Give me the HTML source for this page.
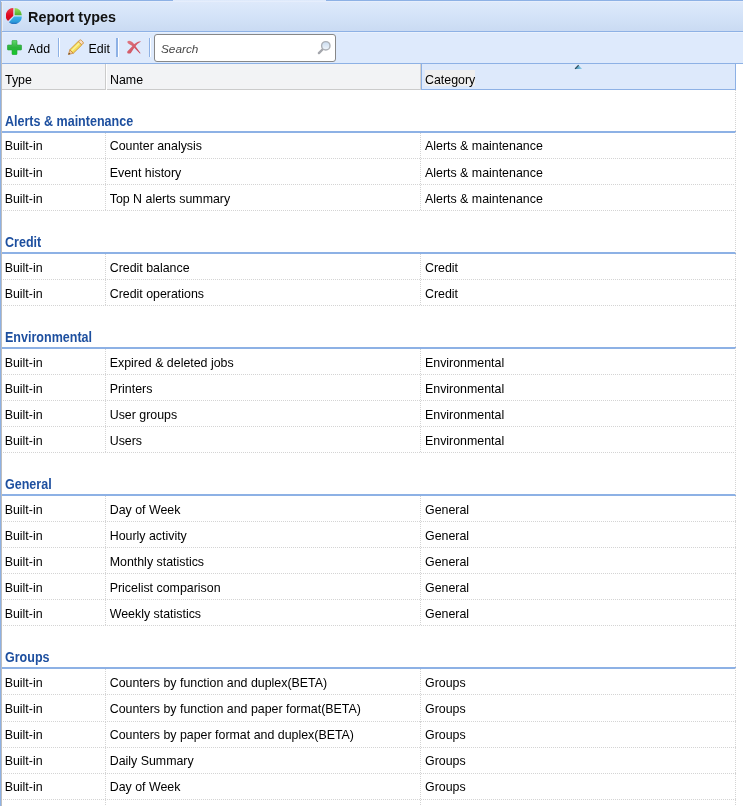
<!DOCTYPE html><html><head><meta charset="utf-8"><style>
*{box-sizing:border-box}
html,body{margin:0;padding:0}
body{width:743px;height:806px;overflow:hidden;position:relative;-webkit-font-smoothing:antialiased;background:#fff;font-family:"Liberation Sans",sans-serif;color:#000}
.a{position:absolute}
.t{position:absolute;white-space:nowrap;line-height:16px}
#title{left:0;top:0;width:743px;height:32px;background:linear-gradient(#dfeafb,#d4e3f8 50%,#c9daf2)}
#tb{left:0;top:32px;width:743px;height:32px;background:#deeafc}
.hdr{top:64px;height:26px;background:#f2f3f5}
.grow,.row{position:relative;left:0;width:743px}
.grow{height:43px}
.grow .ln{position:absolute;left:2px;width:734px;top:41px;height:2px;background:#8db1e5}
.grow .gt{position:absolute;left:5px;top:24px;font-weight:bold;font-size:14px;transform:scaleX(0.895);transform-origin:0 0;color:#1d4f9f;line-height:14px;white-space:nowrap}
.row{height:26px}
.row .hl{position:absolute;left:2px;width:734px;top:25px;height:1px;background:repeating-linear-gradient(to right,transparent 0 1px,#d4d4d4 1px 2px)}
.vl{position:absolute;top:0;width:1px;height:26px;background:repeating-linear-gradient(to bottom,#d4d4d4 0 1px,transparent 1px 2px)}
.c{position:absolute;top:1.5px;height:25px;line-height:25px;font-size:12.4px;white-space:nowrap}
</style></head><body><div id="root" style="position:absolute;left:0;top:0;width:743px;height:806px;overflow:hidden;will-change:transform">
<div id="title" class="a"></div>
<div class="a" style="left:0;top:0;width:173px;height:1px;background:#8db1e5"></div>
<div class="a" style="left:326px;top:0;width:417px;height:1px;background:#8db1e5"></div>
<div class="a" style="left:1px;top:1px;width:742px;height:1px;background:#e6eefc"></div>
<div class="a" style="left:0;top:31px;width:743px;height:1px;background:#8db1e5"></div>
<svg class="a" style="left:6px;top:8px" width="16" height="16" viewBox="0 0 16 16">
<defs>
<linearGradient id="gr" x1="0" y1="0" x2="0" y2="1"><stop offset="0" stop-color="#e83a48"/><stop offset="0.6" stop-color="#e00820"/><stop offset="1" stop-color="#c81020"/></linearGradient>
<linearGradient id="gg" x1="0" y1="0" x2="0" y2="1"><stop offset="0" stop-color="#9ee05a"/><stop offset="1" stop-color="#4fb02c"/></linearGradient>
<linearGradient id="gb" x1="0" y1="0" x2="0" y2="1"><stop offset="0" stop-color="#3cb4ec"/><stop offset="0.7" stop-color="#2a9ada"/><stop offset="1" stop-color="#2466b8"/></linearGradient>
</defs>
<path d="M8.6,7.2 L8.6,0 A7.2,7.2 0 0 1 15.8,7.2 Z" fill="url(#gg)"/>
<path d="M7.3,7.7 L7.3,0.1 A7.6,7.6 0 0 0 2.0,13.1 Z" fill="url(#gr)"/>
<path d="M8.1,8.5 L15.8,8.5 A7.7,7.7 0 0 1 2.9,14.2 Z" fill="url(#gb)"/>
</svg>
<div class="t" style="left:28px;top:9px;font-size:14.4px;font-weight:bold;color:#111">Report types</div>
<div id="tb" class="a"></div>
<div class="a" style="left:2px;top:32px;width:741px;height:1px;background:#e9f1fd"></div>
<div class="a" style="left:0;top:63px;width:743px;height:1px;background:#8db1e5"></div>
<svg class="a" style="left:7px;top:40px" width="15" height="15" viewBox="0 0 15 15">
<defs><linearGradient id="pg" x1="0" y1="0" x2="0" y2="1"><stop offset="0" stop-color="#62d86c"/><stop offset="0.5" stop-color="#2eb23e"/><stop offset="1" stop-color="#12cc2a"/></linearGradient></defs>
<path d="M6,0.3 H9 Q10,0.3 10,1.3 V5 H13.7 Q14.7,5 14.7,6 V9 Q14.7,10 13.7,10 H10 V13.7 Q10,14.7 9,14.7 H6 Q5,14.7 5,13.7 V10 H1.3 Q0.3,10 0.3,9 V6 Q0.3,5 1.3,5 H5 V1.3 Q5,0.3 6,0.3 Z" fill="url(#pg)" stroke="#2a9e3a" stroke-width="0.6"/>
</svg>
<div class="t" style="left:28px;top:41px;font-size:12.4px">Add</div>
<div class="a" style="left:58px;top:38px;width:1px;height:19px;background:#8db1e5"></div><div class="a" style="left:59px;top:38px;width:1px;height:19px;background:#fff"></div>
<svg class="a" style="left:66px;top:38px" width="20" height="20" viewBox="0 0 20 20">
<g transform="rotate(-44.4 9.6 9.45)">
<path d="M-0.5,9.5 L3.9,7.1 L3.9,11.9 Z" fill="#f3c89a" stroke="#c8863c" stroke-width="0.7"/>
<path d="M-0.6,9.5 L1.2,8.5 L1.2,10.5 Z" fill="#4a3010"/>
<rect x="3.9" y="7.0" width="11.9" height="5" fill="#f4df58" stroke="#cc8a30" stroke-width="0.8"/>
<rect x="4.5" y="8.2" width="10.9" height="1.6" fill="#faef9a"/>
<rect x="15.7" y="7.0" width="3.0" height="5" rx="1.4" fill="#f9e0c8" stroke="#cc8a30" stroke-width="0.8"/>
</g></svg>
<div class="t" style="left:88.5px;top:41px;font-size:12.4px">Edit</div>
<div class="a" style="left:116px;top:38px;width:2px;height:19px;background:#8db1e5"></div><div class="a" style="left:118px;top:38px;width:1px;height:19px;background:#fff"></div>
<svg class="a" style="left:124px;top:38px" width="20" height="18" viewBox="0 0 20 18">
<defs><linearGradient id="xg" x1="0" y1="0" x2="1" y2="1"><stop offset="0" stop-color="#e07a84"/><stop offset="1" stop-color="#c84050"/></linearGradient></defs>
<path d="M3.4,3.6 C4.2,2.2 7.4,2.6 9.6,5.4 L16.6,15.3 L15.9,15.6 L8.4,8.0 C6.6,6.6 2.9,5.9 3.4,3.6 Z" fill="url(#xg)"/>
<path d="M3.3,13.4 L10.4,6.0 C12.4,4.4 14.5,3.4 16.6,3.2 L16.7,3.7 C14.6,4.8 12.6,6.6 11.1,8.6 L6.9,14.9 C5.8,16.3 2.4,15.6 3.3,13.4 Z" fill="url(#xg)"/>
</svg>
<div class="a" style="left:149px;top:38px;width:1px;height:19px;background:#8db1e5"></div><div class="a" style="left:150px;top:38px;width:1px;height:19px;background:#fff"></div>
<div class="a" style="left:154px;top:34px;width:182px;height:28px;background:#fff;border:1px solid #878787;border-radius:3px"></div>
<div class="t" style="left:161px;top:40.5px;font-size:11.8px;font-style:italic;color:#474747">Search</div>
<svg class="a" style="left:314px;top:38px" width="20" height="20" viewBox="0 0 20 20">
<defs><linearGradient id="mg" x1="0" y1="0" x2="0" y2="1"><stop offset="0" stop-color="#cadcf0"/><stop offset="1" stop-color="#f2f7fc"/></linearGradient></defs>
<line x1="4.9" y1="15.1" x2="9" y2="11" stroke="#a4a6ac" stroke-width="2.4" stroke-linecap="round"/>
<circle cx="11.8" cy="7.8" r="4.2" fill="url(#mg)" stroke="#acb0b6" stroke-width="1.4"/>
</svg>
<div class="a hdr" style="left:2px;width:104px;border-right:1px solid #cbcbcb;border-bottom:1px solid #cbcbcb"></div>
<div class="a" style="left:106px;top:64px;width:1px;height:26px;background:#fff"></div>
<div class="a hdr" style="left:107px;width:314px;border-right:1px solid #d6d2cd;border-bottom:1px solid #cbcbcb"></div>
<div class="a hdr" style="left:421px;width:315px;background:#dde9fb;border:1px solid #8db1e5;border-top:0"></div>
<div class="t" style="left:5px;top:72px;font-size:12.4px">Type</div>
<div class="t" style="left:110px;top:72px;font-size:12.4px">Name</div>
<div class="a" style="left:425px;top:70px;width:50px;height:16px;background:#efefef"></div>
<div class="t" style="left:425px;top:72px;font-size:12.4px">Category</div>
<svg class="a" style="left:574px;top:64px" width="9" height="6" viewBox="0 0 9 6">
<defs><linearGradient id="ag" x1="0" y1="0" x2="1" y2="0"><stop offset="0" stop-color="#3a8ab0"/><stop offset="1" stop-color="#9ad4ee"/></linearGradient></defs><path d="M1,5 L4.6,1.2 L8.2,5 Z" fill="url(#ag)"/><path d="M1,4.9 L4.6,1.2" stroke="#2a4656" stroke-width="1.1"/>
</svg>
<div class="a" style="left:0;top:90px;width:743px">
<div class="grow"><div class="gt">Alerts &amp; maintenance</div><div class="ln"></div></div>
<div class="row" style="height:26px"><div class="c" style="left:4.7px;top:1px">Built-in</div><div class="c" style="left:109.7px;top:1px">Counter analysis</div><div class="c" style="left:425px;top:1px">Alerts &amp; maintenance</div><div class="vl" style="left:105px;height:26px"></div><div class="vl" style="left:420px;height:26px"></div><div class="hl" style="top:25px"></div></div>
<div class="row" style="height:26px"><div class="c" style="left:4.7px">Built-in</div><div class="c" style="left:109.7px">Event history</div><div class="c" style="left:425px">Alerts &amp; maintenance</div><div class="vl" style="left:105px;height:26px"></div><div class="vl" style="left:420px;height:26px"></div><div class="hl" style="top:25px"></div></div>
<div class="row" style="height:26px"><div class="c" style="left:4.7px">Built-in</div><div class="c" style="left:109.7px">Top N alerts summary</div><div class="c" style="left:425px">Alerts &amp; maintenance</div><div class="vl" style="left:105px;height:26px"></div><div class="vl" style="left:420px;height:26px"></div><div class="hl" style="top:25px"></div></div>
<div class="grow"><div class="gt">Credit</div><div class="ln"></div></div>
<div class="row" style="height:26px"><div class="c" style="left:4.7px">Built-in</div><div class="c" style="left:109.7px">Credit balance</div><div class="c" style="left:425px">Credit</div><div class="vl" style="left:105px;height:26px"></div><div class="vl" style="left:420px;height:26px"></div><div class="hl" style="top:25px"></div></div>
<div class="row" style="height:26px"><div class="c" style="left:4.7px">Built-in</div><div class="c" style="left:109.7px">Credit operations</div><div class="c" style="left:425px">Credit</div><div class="vl" style="left:105px;height:26px"></div><div class="vl" style="left:420px;height:26px"></div><div class="hl" style="top:25px"></div></div>
<div class="grow"><div class="gt">Environmental</div><div class="ln"></div></div>
<div class="row" style="height:26px"><div class="c" style="left:4.7px">Built-in</div><div class="c" style="left:109.7px">Expired &amp; deleted jobs</div><div class="c" style="left:425px">Environmental</div><div class="vl" style="left:105px;height:26px"></div><div class="vl" style="left:420px;height:26px"></div><div class="hl" style="top:25px"></div></div>
<div class="row" style="height:26px"><div class="c" style="left:4.7px">Built-in</div><div class="c" style="left:109.7px">Printers</div><div class="c" style="left:425px">Environmental</div><div class="vl" style="left:105px;height:26px"></div><div class="vl" style="left:420px;height:26px"></div><div class="hl" style="top:25px"></div></div>
<div class="row" style="height:26px"><div class="c" style="left:4.7px">Built-in</div><div class="c" style="left:109.7px">User groups</div><div class="c" style="left:425px">Environmental</div><div class="vl" style="left:105px;height:26px"></div><div class="vl" style="left:420px;height:26px"></div><div class="hl" style="top:25px"></div></div>
<div class="row" style="height:26px"><div class="c" style="left:4.7px">Built-in</div><div class="c" style="left:109.7px">Users</div><div class="c" style="left:425px">Environmental</div><div class="vl" style="left:105px;height:26px"></div><div class="vl" style="left:420px;height:26px"></div><div class="hl" style="top:25px"></div></div>
<div class="grow"><div class="gt">General</div><div class="ln"></div></div>
<div class="row" style="height:26px"><div class="c" style="left:4.7px">Built-in</div><div class="c" style="left:109.7px">Day of Week</div><div class="c" style="left:425px">General</div><div class="vl" style="left:105px;height:26px"></div><div class="vl" style="left:420px;height:26px"></div><div class="hl" style="top:25px"></div></div>
<div class="row" style="height:26px"><div class="c" style="left:4.7px">Built-in</div><div class="c" style="left:109.7px">Hourly activity</div><div class="c" style="left:425px">General</div><div class="vl" style="left:105px;height:26px"></div><div class="vl" style="left:420px;height:26px"></div><div class="hl" style="top:25px"></div></div>
<div class="row" style="height:26px"><div class="c" style="left:4.7px">Built-in</div><div class="c" style="left:109.7px">Monthly statistics</div><div class="c" style="left:425px">General</div><div class="vl" style="left:105px;height:26px"></div><div class="vl" style="left:420px;height:26px"></div><div class="hl" style="top:25px"></div></div>
<div class="row" style="height:26px"><div class="c" style="left:4.7px">Built-in</div><div class="c" style="left:109.7px">Pricelist comparison</div><div class="c" style="left:425px">General</div><div class="vl" style="left:105px;height:26px"></div><div class="vl" style="left:420px;height:26px"></div><div class="hl" style="top:25px"></div></div>
<div class="row" style="height:26px"><div class="c" style="left:4.7px">Built-in</div><div class="c" style="left:109.7px">Weekly statistics</div><div class="c" style="left:425px">General</div><div class="vl" style="left:105px;height:26px"></div><div class="vl" style="left:420px;height:26px"></div><div class="hl" style="top:25px"></div></div>
<div class="grow"><div class="gt">Groups</div><div class="ln"></div></div>
<div class="row" style="height:26px"><div class="c" style="left:4.7px">Built-in</div><div class="c" style="left:109.7px">Counters by function and duplex(BETA)</div><div class="c" style="left:425px">Groups</div><div class="vl" style="left:105px;height:26px"></div><div class="vl" style="left:420px;height:26px"></div><div class="hl" style="top:25px"></div></div>
<div class="row" style="height:27px"><div class="c" style="left:4.7px">Built-in</div><div class="c" style="left:109.7px">Counters by function and paper format(BETA)</div><div class="c" style="left:425px">Groups</div><div class="vl" style="left:105px;height:27px"></div><div class="vl" style="left:420px;height:27px"></div><div class="hl" style="top:26px"></div></div>
<div class="row" style="height:26px"><div class="c" style="left:4.7px;top:1px">Built-in</div><div class="c" style="left:109.7px;top:1px">Counters by paper format and duplex(BETA)</div><div class="c" style="left:425px;top:1px">Groups</div><div class="vl" style="left:105px;height:26px"></div><div class="vl" style="left:420px;height:26px"></div><div class="hl" style="top:25px"></div></div>
<div class="row" style="height:26px"><div class="c" style="left:4.7px;top:1px">Built-in</div><div class="c" style="left:109.7px;top:1px">Daily Summary</div><div class="c" style="left:425px;top:1px">Groups</div><div class="vl" style="left:105px;height:26px"></div><div class="vl" style="left:420px;height:26px"></div><div class="hl" style="top:25px"></div></div>
<div class="row" style="height:26px"><div class="c" style="left:4.7px;top:1px">Built-in</div><div class="c" style="left:109.7px;top:1px">Day of Week</div><div class="c" style="left:425px;top:1px">Groups</div><div class="vl" style="left:105px;height:26px"></div><div class="vl" style="left:420px;height:26px"></div><div class="hl" style="top:25px"></div></div>
<div class="row" style="height:26px"><div class="c" style="left:4.7px;top:1px"></div><div class="c" style="left:109.7px;top:1px"></div><div class="c" style="left:425px;top:1px"></div><div class="vl" style="left:105px;height:26px"></div><div class="vl" style="left:420px;height:26px"></div><div class="hl" style="top:25px"></div></div>
</div>
<div class="a" style="left:735px;top:90px;width:1px;height:716px;background:repeating-linear-gradient(to bottom,#d4d4d4 0 1px,transparent 1px 2px)"></div>
<div class="a" style="left:0;top:0;width:1px;height:806px;background:#8db1e5"></div>
<div class="a" style="left:1px;top:2px;width:1px;height:804px;background:#bdbdbd"></div>
<div class="a" style="left:2px;top:2px;width:1px;height:29px;background:#e6effc"></div>
<div class="a" style="left:2px;top:32px;width:1px;height:31px;background:#e6effc"></div>
</div></body></html>
